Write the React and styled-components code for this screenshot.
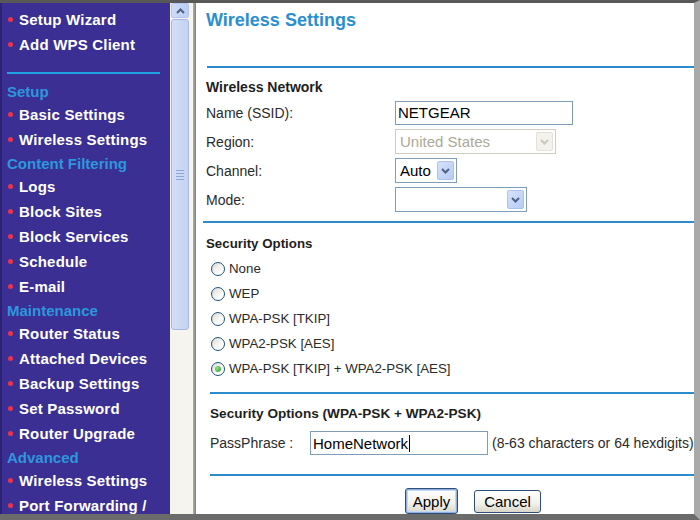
import React from 'react'
import styled, { createGlobalStyle } from 'styled-components'

const GlobalStyle = createGlobalStyle`
  html, body {
    margin: 0;
    padding: 0;
    background: #fff;
  }
  body {
    font-family: "Liberation Sans", Arial, sans-serif;
  }
`

const Frame = styled.div`
  display: flex;
  width: 700px;
  height: 520px;
  box-sizing: border-box;
  border-top: 3px solid #585858;
  border-bottom: 6px solid #6b6b6b;
  border-right: 6px solid #a9a9a9;
  overflow: hidden;
`

const Sidebar = styled.nav`
  width: 170px;
  flex-shrink: 0;
  box-sizing: border-box;
  background: #3b2f93;
  border-left: 2px solid #2b2274;
  padding-top: 4px;
  overflow: hidden;
`

const NavItem = styled.div`
  display: flex;
  align-items: center;
  height: 25px;
  padding-left: 6px;
  color: #fff;
  font: bold 15px "Liberation Sans", Arial, sans-serif;
  letter-spacing: 0.2px;
  white-space: nowrap;

  &::before {
    content: '';
    width: 5px;
    height: 5px;
    border-radius: 50%;
    background: #e8344f;
    margin-right: 6px;
    flex-shrink: 0;
  }
`

const NavHeader = styled.div`
  display: flex;
  align-items: center;
  height: 22px;
  padding-left: 5px;
  color: #2d97dd;
  font: bold 15px "Liberation Sans", Arial, sans-serif;
  white-space: nowrap;
`

const NavRule = styled.div`
  height: 2px;
  margin: 15px 10px 6px 5px;
  background: #1fa2e3;
`

const ScrollTrack = styled.div`
  width: 23px;
  flex-shrink: 0;
  box-sizing: border-box;
  padding: 0 4px 0 1px;
  background: #f5f4ef;
  display: flex;
  flex-direction: column;
`

const ScrollButton = styled.div`
  height: 15px;
  box-sizing: border-box;
  border: 1px solid #b3c5ef;
  border-radius: 2px;
  background: linear-gradient(90deg, #cfdcf8, #bccff5);
  display: flex;
  align-items: center;
  justify-content: center;
`

const ScrollThumb = styled.div`
  height: 311px;
  margin-top: 1px;
  box-sizing: border-box;
  border: 1px solid #a6b9e2;
  border-radius: 3px;
  background: linear-gradient(90deg, #d3def5, #c3d3f2);
  display: flex;
  flex-direction: column;
  align-items: center;
  justify-content: center;
  gap: 2px;
`

const Grip = styled.span`
  width: 8px;
  height: 1px;
  background: #8ea6d8;
`

const Divider = styled.div`
  width: 3px;
  flex-shrink: 0;
  background: linear-gradient(90deg, #b4b4ac, #7d7d76);
`

const Main = styled.main`
  flex: 1;
  display: flex;
  flex-direction: column;
  min-width: 0;
`

const Title = styled.h1`
  margin: 5px 0 0 10px;
  font: bold 18px/24px "Liberation Sans", Arial, sans-serif;
  color: #2b8ed0;
`

const Rule = styled.div`
  height: 2px;
  margin-top: ${p => p.$top}px;
  margin-left: ${p => p.$left}px;
  background: #2c8bcb;
`

const Heading = styled.h2`
  margin: ${p => p.$top}px 0 0 ${p => p.$left}px;
  font: bold ${p => p.$size || 14}px/20px "Liberation Sans", Arial, sans-serif;
  color: #1e1e1e;
`

const FormGrid = styled.div`
  display: flex;
  flex-direction: column;
  gap: 4px;
  margin-top: 3px;
  padding-left: 10px;
`

const FormRow = styled.div`
  display: flex;
  align-items: center;
  height: 25px;
`

const Label = styled.span`
  width: ${p => p.$width}px;
  flex-shrink: 0;
  font-size: 14px;
  color: #2a2a2a;
`

const Field = styled.div`
  width: ${p => p.$width}px;
  height: 24px;
  box-sizing: border-box;
  border: 1px solid #7f9db9;
  background: #fff;
  padding-left: 2px;
  display: flex;
  align-items: center;
  font-size: 15px;
  color: #000;
`

const Caret = styled.span`
  width: 1px;
  height: 17px;
  background: #000;
  margin-left: 1px;
`

const SelectBox = styled.div`
  width: ${p => p.$width}px;
  height: 25px;
  box-sizing: border-box;
  border: 1px solid ${p => (p.$disabled ? '#cfcdc2' : '#7f9db9')};
  background: #fff;
  padding: 2px 2px 2px 4px;
  display: flex;
  align-items: center;
  justify-content: space-between;
  font-size: 15px;
  color: ${p => (p.$disabled ? '#aca899' : '#000')};
`

const SelectArrow = styled.span`
  width: 17px;
  height: 19px;
  box-sizing: border-box;
  border: 1px solid ${p => (p.$disabled ? '#e4e2d8' : '#aec2ee')};
  border-radius: 2px;
  background: ${p =>
    p.$disabled ? '#f3f2ec' : 'linear-gradient(135deg, #d6e2fb, #b6cbf6)'};
  display: flex;
  align-items: center;
  justify-content: center;
  flex-shrink: 0;
`

const RadioList = styled.div`
  display: flex;
  flex-direction: column;
  margin-top: 2px;
  padding-left: 15px;
`

const RadioRow = styled.label`
  display: flex;
  align-items: center;
  height: 25px;
  font-size: 13.3px;
  color: #2a2a2a;
`

const RadioDot = styled.span`
  width: 14px;
  height: 14px;
  box-sizing: border-box;
  border-radius: 50%;
  border: 1px solid #1d5281;
  background: linear-gradient(135deg, #dcd9cf, #fff 70%);
  margin-right: 4px;
  display: flex;
  align-items: center;
  justify-content: center;

  &::after {
    content: '';
    display: ${p => (p.$checked ? 'block' : 'none')};
    width: 6px;
    height: 6px;
    border-radius: 50%;
    background: radial-gradient(circle at 35% 35%, #8ee08a, #21a121);
  }
`

const PassRow = styled.div`
  display: flex;
  align-items: center;
  height: 24px;
  margin-top: 7px;
  padding-left: 14px;
`

const Hint = styled.span`
  margin-left: 4px;
  font-size: 14px;
  color: #2a2a2a;
  white-space: nowrap;
`

const ButtonRow = styled.div`
  display: flex;
  align-items: center;
  gap: 16px;
  margin-top: 12px;
  padding-left: 209px;
`

const Button = styled.button`
  width: ${p => p.$width}px;
  height: ${p => (p.$primary ? 26 : 23)}px;
  padding: 0;
  font: 15px "Liberation Sans", Arial, sans-serif;
  color: #000;
  border: 1px solid #2f4f7a;
  border-radius: 3px;
  background: linear-gradient(#fff, #f2f1ea 60%, #d9d5c8);
  box-shadow: ${p =>
    p.$primary ? 'inset 0 0 0 1px #8fb0dc, inset 0 0 0 2px #c3d8f7' : 'none'};
`

const Chevron = ({ up, color }) => (
  <svg width="9" height="6" viewBox="0 0 9 6">
    <path
      d={up ? 'M1 5 L4.5 1.5 L8 5' : 'M1 1 L4.5 4.5 L8 1'}
      fill="none"
      stroke={color}
      strokeWidth="2"
    />
  </svg>
)

const menu = [
  { item: 'Setup Wizard' },
  { item: 'Add WPS Client' },
  { rule: true },
  { header: 'Setup' },
  { item: 'Basic Settings' },
  { item: 'Wireless Settings' },
  { header: 'Content Filtering' },
  { item: 'Logs' },
  { item: 'Block Sites' },
  { item: 'Block Services' },
  { item: 'Schedule' },
  { item: 'E-mail' },
  { header: 'Maintenance' },
  { item: 'Router Status' },
  { item: 'Attached Devices' },
  { item: 'Backup Settings' },
  { item: 'Set Password' },
  { item: 'Router Upgrade' },
  { header: 'Advanced' },
  { item: 'Wireless Settings' },
  { item: 'Port Forwarding /' },
  { item: 'Port Triggering' },
]

const securityOptions = [
  'None',
  'WEP',
  'WPA-PSK [TKIP]',
  'WPA2-PSK [AES]',
  'WPA-PSK [TKIP] + WPA2-PSK [AES]',
]

const Select = ({ width, value, disabled }) => (
  <SelectBox $width={width} $disabled={disabled}>
    <span>{value}</span>
    <SelectArrow $disabled={disabled}>
      <Chevron color={disabled ? '#c9c7ba' : '#4d6185'} />
    </SelectArrow>
  </SelectBox>
)

const App = () => {
  return (
    <>
      <GlobalStyle />
      <Frame>
        <Sidebar>
          {menu.map((entry, i) => {
            if (entry.rule) return <NavRule key={i} />
            if (entry.header) return <NavHeader key={i}>{entry.header}</NavHeader>
            return <NavItem key={i}>{entry.item}</NavItem>
          })}
        </Sidebar>
        <ScrollTrack>
          <ScrollButton>
            <Chevron up color="#4d6185" />
          </ScrollButton>
          <ScrollThumb>
            <Grip />
            <Grip />
            <Grip />
            <Grip />
          </ScrollThumb>
        </ScrollTrack>
        <Divider />
        <Main>
          <Title>Wireless Settings</Title>
          <Rule $top={34} $left={11} />

          <Heading $top={9} $left={10}>Wireless Network</Heading>
          <FormGrid>
            <FormRow>
              <Label $width={189}>Name (SSID):</Label>
              <Field $width={178}>NETGEAR</Field>
            </FormRow>
            <FormRow>
              <Label $width={189}>Region:</Label>
              <Select width={161} value="United States" disabled />
            </FormRow>
            <FormRow>
              <Label $width={189}>Channel:</Label>
              <Select width={62} value="Auto" />
            </FormRow>
            <FormRow>
              <Label $width={189}>Mode:</Label>
              <Select width={132} value="" />
            </FormRow>
          </FormGrid>
          <Rule $top={9} $left={7} />

          <Heading $top={11} $left={10} $size={13.3}>Security Options</Heading>
          <RadioList>
            {securityOptions.map((opt, i) => (
              <RadioRow key={opt}>
                <RadioDot $checked={i === securityOptions.length - 1} />
                {opt}
              </RadioRow>
            ))}
          </RadioList>
          <Rule $top={11} $left={14} />

          <Heading $top={10} $left={14} $size={13.6}>
            Security Options (WPA-PSK + WPA2-PSK)
          </Heading>
          <PassRow>
            <Label $width={100}>PassPhrase :</Label>
            <Field $width={178}>
              HomeNetwork
              <Caret />
            </Field>
            <Hint>(8-63 characters or 64 hexdigits)</Hint>
          </PassRow>
          <Rule $top={19} $left={14} />

          <ButtonRow>
            <Button $primary $width={53}>Apply</Button>
            <Button $width={67}>Cancel</Button>
          </ButtonRow>
        </Main>
      </Frame>
    </>
  )
}

export default App
